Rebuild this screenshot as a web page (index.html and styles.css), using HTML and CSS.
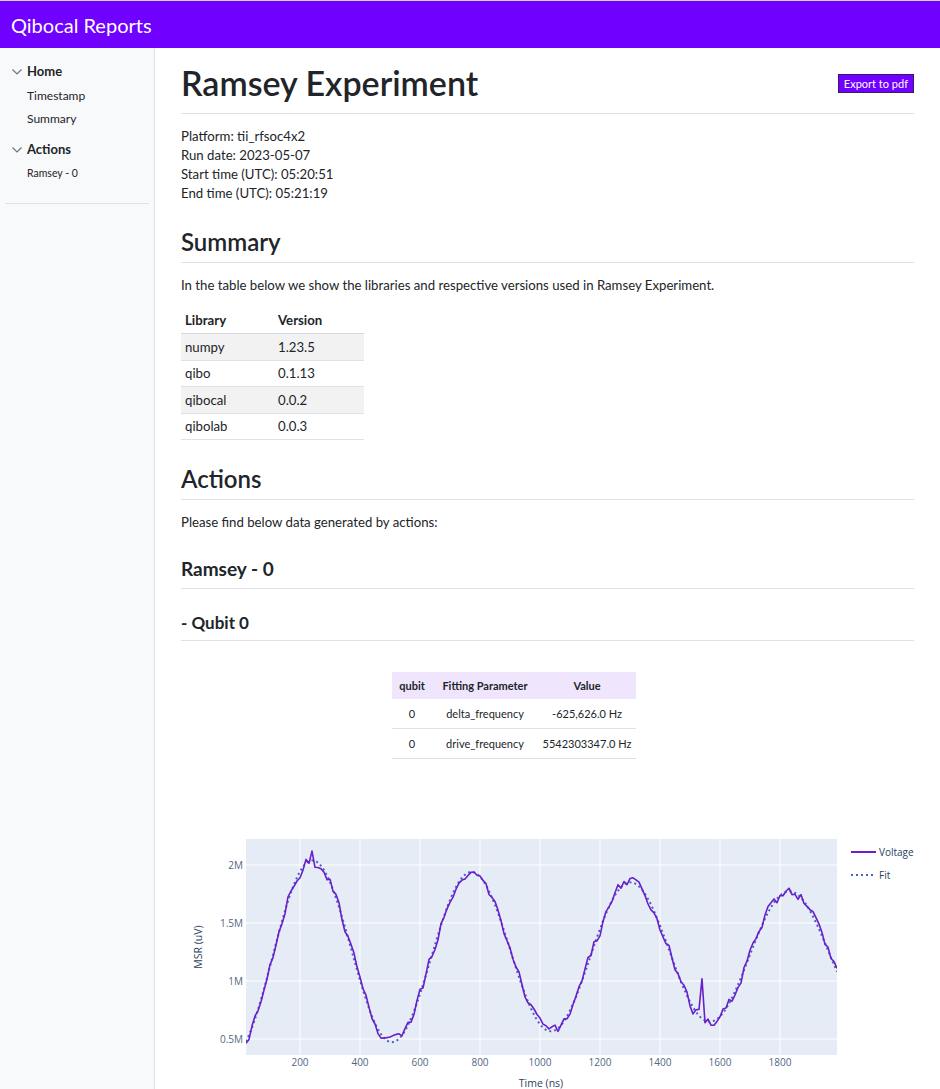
FILE: index.html
```html
<!DOCTYPE html>
<html lang="en">
<head>
<meta charset="utf-8">
<title>Qibocal Reports</title>
<link rel="stylesheet" href="styles.css">
</head>
<body>
<header class="topbar"><span class="brand">Qibocal Reports</span></header>
<div class="layout">
  <nav class="sidebar">
    <div class="nav-group"><svg class="chev" viewBox="0 0 10 6"><path d="M0.5 0.5 L5 5 L9.5 0.5" fill="none" stroke="#6c757d" stroke-width="1.2"/></svg><span>Home</span></div>
    <div class="nav-links">
      <a class="nav-link">Timestamp</a>
      <a class="nav-link">Summary</a>
    </div>
    <div class="nav-group nav-group-2"><svg class="chev" viewBox="0 0 10 6"><path d="M0.5 0.5 L5 5 L9.5 0.5" fill="none" stroke="#6c757d" stroke-width="1.2"/></svg><span>Actions</span></div>
    <a class="nav-sub">Ramsey - 0</a>
    <hr class="side-rule">
  </nav>
  <main class="content">
    <div class="title-row">
      <h1 class="title">Ramsey Experiment</h1>
      <button class="export">Export to pdf</button>
    </div>
    <hr class="rule rule-title">
    <div class="meta">
      <div>Platform: tii_rfsoc4x2</div>
      <div>Run date: 2023-05-07</div>
      <div>Start time (UTC): 05:20:51</div>
      <div>End time (UTC): 05:21:19</div>
    </div>

    <h2 class="section">Summary</h2>
    <hr class="rule rule-h2">
    <p class="para">In the table below we show the libraries and respective versions used in Ramsey Experiment.</p>
    <table class="libs">
      <thead><tr><th class="c1">Library</th><th>Version</th></tr></thead>
      <tbody>
        <tr class="odd"><td>numpy</td><td>1.23.5</td></tr>
        <tr><td>qibo</td><td>0.1.13</td></tr>
        <tr class="odd"><td>qibocal</td><td>0.0.2</td></tr>
        <tr><td>qibolab</td><td>0.0.3</td></tr>
      </tbody>
    </table>

    <h2 class="section">Actions</h2>
    <hr class="rule rule-h2">
    <p class="para">Please find below data generated by actions:</p>

    <h3 class="sub">Ramsey - 0</h3>
    <hr class="rule rule-h3">
    <h4 class="subsub">- Qubit 0</h4>
    <hr class="rule rule-h3">

    <div class="fit-wrap">
      <table class="fit">
        <thead><tr><th class="q">qubit</th><th class="p">Fitting Parameter</th><th class="v">Value</th></tr></thead>
        <tbody>
          <tr><td>0</td><td>delta_frequency</td><td>-625,626.0 Hz</td></tr>
          <tr><td>0</td><td>drive_frequency</td><td>5542303347.0 Hz</td></tr>
        </tbody>
      </table>
    </div>

    <svg class="plot" width="733" height="320" viewBox="0 0 733 320">
      <defs><clipPath id="pc"><rect x="65" y="60" width="591" height="216"/></clipPath></defs>
      <rect x="65" y="60" width="591" height="216" fill="#e5ecf6"/>
      <g stroke="#ffffff" stroke-width="1">
        <line x1="119" y1="60" x2="119" y2="276"/>
        <line x1="179" y1="60" x2="179" y2="276"/>
        <line x1="239" y1="60" x2="239" y2="276"/>
        <line x1="299" y1="60" x2="299" y2="276"/>
        <line x1="359" y1="60" x2="359" y2="276"/>
        <line x1="419" y1="60" x2="419" y2="276"/>
        <line x1="479" y1="60" x2="479" y2="276"/>
        <line x1="539" y1="60" x2="539" y2="276"/>
        <line x1="599" y1="60" x2="599" y2="276"/>
        <line x1="65" y1="86" x2="656" y2="86"/>
        <line x1="65" y1="144" x2="656" y2="144"/>
        <line x1="65" y1="202" x2="656" y2="202"/>
        <line x1="65" y1="260" x2="656" y2="260"/>
      </g>
      <g clip-path="url(#pc)" fill="none">
        <polyline id="fit-line" stroke="#4a5fc1" stroke-width="2" stroke-dasharray="2,3" points=""/>
        <polyline id="data-line" stroke="#6b1fc9" stroke-width="1.6" stroke-linejoin="round" points=""/>
      </g>
      <g class="tick" text-anchor="middle">
        <text x="119" y="287">200</text>
        <text x="179" y="287">400</text>
        <text x="239" y="287">600</text>
        <text x="299" y="287">800</text>
        <text x="359" y="287">1000</text>
        <text x="419" y="287">1200</text>
        <text x="479" y="287">1400</text>
        <text x="539" y="287">1600</text>
        <text x="599" y="287">1800</text>
      </g>
      <g class="tick" text-anchor="end">
        <text x="62" y="89.5">2M</text>
        <text x="62" y="147.5">1.5M</text>
        <text x="62" y="205.5">1M</text>
        <text x="62" y="263.5">0.5M</text>
      </g>
      <text class="axis-title" x="360" y="308" text-anchor="middle">Time (ns)</text>
      <text class="axis-title" x="0" y="0" text-anchor="middle" transform="translate(21 168) rotate(-90)">MSR (uV)</text>
      <line x1="670" y1="73" x2="695" y2="73" stroke="#6b1fc9" stroke-width="2"/>
      <text class="legend" x="698" y="76.5">Voltage</text>
      <line x1="670" y1="96" x2="695" y2="96" stroke="#4a5fc1" stroke-width="2" stroke-dasharray="2,3"/>
      <text class="legend" x="698" y="99.5">Fit</text>
    </svg>
  </main>
</div>
<script src="script.js"></script>
</body>
</html>
```

FILE: styles.css
```css
* { box-sizing: border-box; }

body {
  margin: 0;
  font-family: Lato, "Open Sans", sans-serif;
  font-size: 13.2px;
  line-height: 1.5;
  color: #212529;
  background: #ffffff;
}

.topbar {
  height: 48px;
  border-top: 1px solid #d4d4d4;
  background: #7000ff;
  display: flex;
  align-items: center;
  padding-left: 11px;
}

.brand {
  color: #ffffff;
  font-size: 20px;
  line-height: 1;
}

.layout {
  display: flex;
}

.sidebar {
  width: 155px;
  flex: none;
  min-height: 1041px;
  background: #f8f9fa;
  border-right: 1px solid #dee2e6;
  padding: 12px 5px 0;
}

.nav-group {
  display: flex;
  align-items: center;
  gap: 5px;
  height: 24px;
  padding-left: 7px;
  font-size: 13px;
  font-weight: 700;
}

.nav-group-2 {
  margin-top: 8px;
}

.chev {
  width: 10px;
  height: 6px;
  flex: none;
}

.nav-link {
  display: block;
  height: 23px;
  line-height: 23px;
  padding-left: 22px;
  font-size: 12px;
}

.nav-sub {
  display: block;
  height: 22px;
  line-height: 22px;
  padding-left: 22px;
  font-size: 10.5px;
}

.side-rule {
  border: 0;
  border-top: 1px solid #dee2e6;
  margin: 19px 0 0;
}

.content {
  flex: 1;
  padding: 0 26px 0;
  min-width: 0;
}

.title-row {
  display: flex;
  justify-content: space-between;
  align-items: center;
  margin-top: 12.5px;
}

.title {
  margin: 0;
  font-size: 34px;
  font-weight: 600;
  line-height: 43px;
}

.export {
  font-family: inherit;
  font-size: 11px;
  line-height: 15px;
  color: #ffffff;
  background: #7000ff;
  border: 1px solid #3b1a66;
  padding: 1px 5px;
  margin-top: 2px;
}

.rule {
  border: 0;
  border-top: 1px solid #dee2e6;
  margin: 0;
}

.rule-title { margin-top: 9.5px; }
.rule-h2 { margin-top: 6px; }
.rule-h3 { margin-top: 7.5px; }

.meta {
  margin-top: 12.5px;
  line-height: 19.3px;
}

.section {
  margin: 23.5px 0 0;
  font-size: 24px;
  font-weight: 600;
  line-height: 29px;
}

.para {
  margin: 13px 0 0;
  line-height: 19.2px;
}

.libs {
  width: 183px;
  margin-top: 13px;
  border-collapse: collapse;
}

.libs th {
  text-align: left;
  font-weight: 700;
  padding: 3px 4px;
  line-height: 19px;
  border-bottom: 1px solid #d5d9dd;
}

.libs th.c1 { width: 93px; }

.libs td {
  padding: 3.25px 4px;
  line-height: 19px;
  border-bottom: 1px solid #dee2e6;
}

.libs tr.odd td { background: #f2f2f2; }

.sub {
  margin: 25px 0 0;
  font-size: 19px;
  font-weight: 700;
  line-height: 23px;
}

.subsub {
  margin: 24px 0 0;
  font-size: 17px;
  font-weight: 700;
  line-height: 20px;
}

.fit-wrap {
  margin-top: 31px;
  padding-left: 211px;
}

.fit {
  border-collapse: collapse;
  font-size: 11px;
}

.fit th {
  background: #efe5fd;
  font-weight: 700;
  line-height: 17px;
  padding: 5px 0;
  text-align: center;
}

.fit td {
  text-align: center;
  line-height: 17px;
  padding: 6px 0;
  border-bottom: 1px solid #dee2e6;
}

.fit .q { width: 40px; }
.fit .p { width: 106px; }
.fit .v { width: 98px; }

.plot {
  display: block;
  margin-top: 20px;
}

.tick {
  font-family: "Open Sans", sans-serif;
  font-size: 10px;
  fill: #506784;
}

.axis-title {
  font-family: "Open Sans", sans-serif;
  font-size: 10.5px;
  fill: #2a3f5f;
}

.legend {
  font-family: "Open Sans", sans-serif;
  font-size: 10px;
  fill: #2a3f5f;
}
```

FILE: script.js
```js
(function () {
  function X(t) { return 119 + (t - 200) * 0.3; }
  function Y(v) { return 86 + (2 - v) * 116; }
  function fit(t) {
    return 1.23 + 0.86 * Math.exp(-t / 4000) * Math.sin(2 * Math.PI * t / 530 - 1.31);
  }
  var s = 20230507;
  function rnd() { s = (s * 16807) % 2147483647; return s / 2147483647; }

  var fp = [];
  for (var t = 20; t <= 1990; t += 5) {
    fp.push(X(t).toFixed(1) + ',' + Y(fit(t)).toFixed(1));
  }
  var dp = [];
  var prev = 0;
  for (var u = 20; u <= 1990; u += 10) {
    var n = (rnd() - 0.5) * 0.12;
    var noise = 0.75 * n + 0.25 * prev;
    prev = n;
    var v = fit(u) + noise;
    if (u === 240) v = 2.12;
    if (u === 1540) v = 1.02;
    dp.push(X(u).toFixed(1) + ',' + Y(v).toFixed(1));
  }
  document.getElementById('fit-line').setAttribute('points', fp.join(' '));
  document.getElementById('data-line').setAttribute('points', dp.join(' '));
})();
```
